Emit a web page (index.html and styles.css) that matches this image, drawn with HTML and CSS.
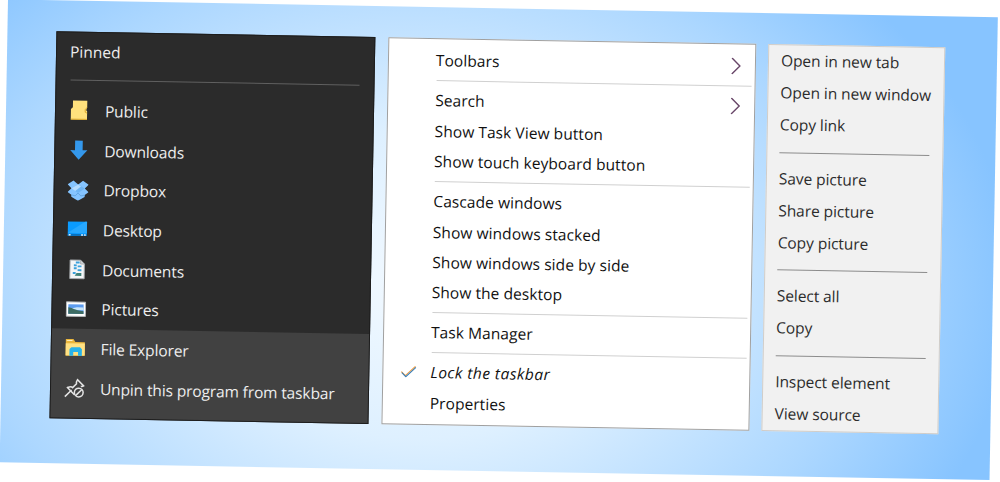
FILE: index.html
```html
<!DOCTYPE html>
<html lang="en">

<head>
    <meta charset="UTF-8">
    <meta name="viewport" content="width=device-width, initial-scale=1.0">
    <title>Context menus</title>
    <link rel="stylesheet" href="styles.css">
</head>

<body>
    <div class="desktop">

        <!-- jump list -->
        <div class="menu jump-list">
            <div class="jump-title">Pinned</div>
            <div class="jump-line"></div>
            <ul>
                <li>
                    <svg class="icon" viewBox="0 0 22 22">
                        <path d="M4 1h15v7l-1 3 1 1v9H2V10l2-2z" fill="#ffe17d" />
                        <path d="M19 8l-2 2v3l2 1M2 20.5h17" stroke="#dba72b" fill="none" />
                    </svg>
                    <span>Public</span>
                </li>
                <li>
                    <svg class="icon" viewBox="0 0 22 22">
                        <path d="M7 1h8v10h5l-9 10-9-10h5z" fill="#3498ec" />
                    </svg>
                    <span>Downloads</span>
                </li>
                <li>
                    <svg class="icon" viewBox="0 0 22 22">
                        <path d="M6 1l5 4 5-4 6 4-4 4 4 4-4 3v2l-7 4-7-4v-2l-4-3 4-4-4-4z" fill="#85c4ff" />
                        <path d="M11 5l7 4-7 5-7-5z" fill="#6fb5f3" />
                        <path d="M11 5l3 2-6 5-4-3z" fill="#b5dcff" />
                        <path d="M4 16l4 1 3-3 3 3 4-1" stroke="#62a5e2" fill="none" />
                    </svg>
                    <span>Dropbox</span>
                </li>
                <li>
                    <svg class="icon" viewBox="0 0 22 22">
                        <path d="M1 3h20v15H1z" fill="#0a9bff" />
                        <path d="M1 15L19 3h2v12z" fill="#27a8ff" />
                        <path d="M1 16h20v2H1z" fill="#0870bd" />
                        <path d="M2 17h2M15 17h2M18 17h2" stroke="#d8efff" stroke-width="1.4" />
                    </svg>
                    <span>Desktop</span>
                </li>
                <li>
                    <svg class="icon" viewBox="0 0 22 22">
                        <path d="M4 1.500h11l4 4V21H4z" fill="#f4f6f7" stroke="#a9adb0" />
                        <path d="M15 1.500v4h4" fill="#cfd4d8" stroke="#a9adb0" />
                        <path d="M10 4h4M8 7h3M12 8h4M8 10h3M12 12h4M7 15h3" stroke="#3aa0dc" stroke-width="2" />
                        <path d="M11 15h5v3H9z" fill="#3f8179" />
                    </svg>
                    <span>Documents</span>
                </li>
                <li>
                    <svg class="icon" viewBox="0 0 22 22">
                        <path d="M1 3.500h20v15H1z" fill="#fff" stroke="#b5b8ba" />
                        <path d="M3 6h16v10H3z" fill="#5c9cf0" />
                        <path d="M3 11l9-2h7v3H3z" fill="#c9e6fa" />
                        <path d="M3 9c4 0 6 3 16 4v3H3z" fill="#3d6c63" />
                    </svg>
                    <span>Pictures</span>
                </li>
            </ul>
            <ul class="jump-actions">
                <li>
                    <svg class="icon" viewBox="0 0 22 22">
                        <path d="M1 1.500h8l2 3h10V19H1z" fill="#e9b63d" />
                        <path d="M1 6h20v12.500H1z" fill="#ffe183" />
                        <path d="M2 2.500h6v1H2z" fill="#fff6cf" />
                        <path d="M5 19v-7l2-2h9l2 2v7h-4v-4H9v4z" fill="#28b3ea" />
                    </svg>
                    <span>File Explorer</span>
                </li>
                <li>
                    <svg class="icon" viewBox="0 0 22 22" fill="none" stroke="#e4e4e4" stroke-width="1.600">
                        <path d="M1 20l7-7M3 10l8 8M4 10.500c2-1 4-1 5 0l4-4c-.5-1.500 0-3 1-4.500l6.500 6.500c-1.500 1-2 .5-3 .5" />
                        <circle cx="15.500" cy="15.500" r="4.600" />
                        <path d="M12.500 18.500l6-6" />
                    </svg>
                    <span>Unpin this program from taskbar</span>
                </li>
            </ul>
        </div>

        <!-- taskbar menu -->
        <div class="menu taskbar-menu">
            <div class="item">Toolbars
                <svg class="arrow" viewBox="0 0 10 17">
                    <path d="M1 .5l8 8-8 8" />
                </svg>
            </div>
            <hr>
            <div class="item">Search
                <svg class="arrow" viewBox="0 0 10 17">
                    <path d="M1 .5l8 8-8 8" />
                </svg>
            </div>
            <div class="item">Show Task View button</div>
            <div class="item">Show touch keyboard button</div>
            <hr>
            <div class="item">Cascade windows</div>
            <div class="item">Show windows stacked</div>
            <div class="item">Show windows side by side</div>
            <div class="item">Show the desktop</div>
            <hr>
            <div class="item">Task Manager</div>
            <hr>
            <div class="item checked">
                <svg class="check" viewBox="0 0 16 12">
                    <path d="M1 6l4 4L15 .5" stroke="#f09a3c" />
                    <path d="M1.500 7l4 4L15.500 1.500" stroke="#3a7fb8" />
                </svg>
                <span>Lock the taskbar</span>
            </div>
            <div class="item">Properties</div>
        </div>

        <!-- browser menu -->
        <div class="menu browser-menu">
            <div class="item">Open in new tab</div>
            <div class="item">Open in new window</div>
            <div class="item">Copy link</div>
            <hr>
            <div class="item">Save picture</div>
            <div class="item">Share picture</div>
            <div class="item">Copy picture</div>
            <hr>
            <div class="item">Select all</div>
            <div class="item">Copy</div>
            <hr>
            <div class="item">Inspect element</div>
            <div class="item">View source</div>
        </div>

    </div>
</body>

</html>
```
FILE: styles.css
```css
* {
    padding: 0;
    margin: 0;
    box-sizing: border-box;
}

html {
    overflow: hidden;
}

body {
    height: 100vh;
    padding-left: 8px;
    background-color: #fff;
    font-family: "Open Sans", "Noto Sans", sans-serif;
    font-size: 15.5px;
}

.desktop {
    display: flex;
    gap: 12.5px;
    width: 990px;
    height: 463px;
    padding: 31px 0 0 49px;
    transform: translateY(-0.6px) rotate(1.03deg);
    transform-origin: 0 0;
    background: radial-gradient(ellipse 60% 95% at 42% 60%, #f2f9ff 0%, #def0ff 35%, #acd7ff 75%, #87c4ff 100%);
}

.menu {
    height: 387px;
    white-space: nowrap;
}

ul {
    list-style: none;
}

.jump-list {
    width: 319px;
    background-color: #2b2b2b;
    color: #eee;
    border: 1px solid #1d1d1d;
    letter-spacing: -0.12px;
}

.jump-title {
    height: 47px;
    padding: 7px 0 0 13px;
    line-height: 24px;
    letter-spacing: 0;
}

.jump-line {
    height: 1px;
    margin: 0 14px 10px;
    background-color: #606060;
}

.jump-list li {
    display: flex;
    align-items: center;
    height: 39.7px;
    padding-left: 13px;
}

.icon {
    width: 21px;
    height: 21px;
    margin-right: 15px;
}

.jump-actions {
    height: 89px;
    background-color: #414141;
}

.taskbar-menu {
    width: 368px;
    padding-top: 6px;
    background-color: #fff;
    border: 1px solid #a0a0a0;
    color: #111;
    letter-spacing: 0.07px;
}

.taskbar-menu .item {
    display: flex;
    align-items: center;
    justify-content: space-between;
    height: 30.4px;
    padding: 0 14px 0 47.5px;
}

.taskbar-menu hr {
    height: 1px;
    margin: 4.5px 3px 4.2px 48px;
    border: none;
    background-color: #d0d0d0;
}

.arrow {
    width: 10px;
    height: 17px;
    fill: none;
    stroke: #684668;
    stroke-width: 1.4;
}

.taskbar-menu .checked {
    justify-content: flex-start;
    padding-left: 17px;
    font-style: italic;
    letter-spacing: 0.45px;
}

.check {
    width: 16px;
    height: 12px;
    margin-right: 14.5px;
    fill: none;
    stroke-width: 1.1;
}

.browser-menu {
    width: 177px;
    background-color: #f1f1f1;
    border: 1px solid #d0cdc9;
    color: #2c2c2c;
    letter-spacing: -0.06px;
}

.browser-menu .item {
    height: 32px;
    padding-left: 12px;
    line-height: 30px;
}

.browser-menu hr {
    height: 1px;
    margin: 10.5px 13px 10px 12px;
    border: none;
    background-color: #8c8c8c;
}
```
